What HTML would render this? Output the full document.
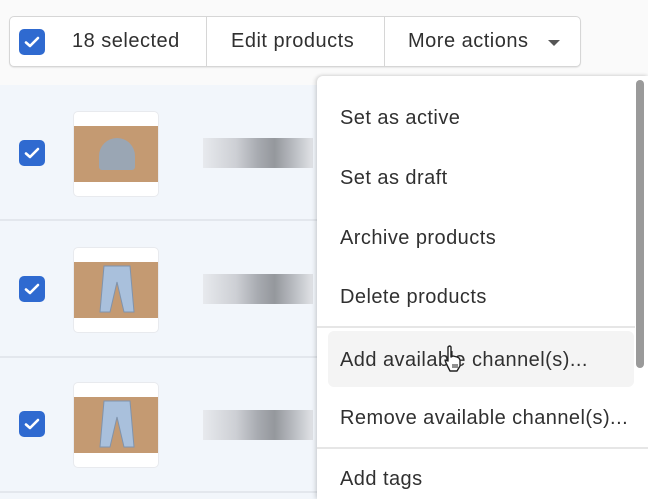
<!DOCTYPE html>
<html><head><style>
*{margin:0;padding:0;box-sizing:border-box}
body{width:648px;height:499px;overflow:hidden;background:#fafafa;font-family:"Liberation Sans",Arial,sans-serif;position:relative;color:#303030}
.abs{position:absolute}
.tb{left:9px;top:16px;width:572px;height:51px;background:#fff;border:1px solid #d6d6d6;border-radius:5px;box-shadow:0 1px 1px rgba(0,0,0,.08)}
.cb{width:26px;height:26px;background:#2f6ad0;border-radius:5px}
.cb svg{position:absolute;left:5px;top:6px}
.t{font-size:20px;letter-spacing:.5px;white-space:nowrap}
.list{left:0;top:85px;width:330px;height:414px;background:#f2f6fb}
.div{height:2px;background:#e3e7ed;left:0;width:330px}
.thumb{left:73px;width:86px;height:86px;background:#fff;border-radius:5px;border:1px solid #e8eaee}
.brown{left:0;width:84px;height:56px;top:14px;background:#c49a72}
.blur{left:203px;width:110px;height:30px;background:linear-gradient(90deg,#e6e8ec 0%,#c9cbd0 30%,#9fa2a8 50%,#8a8d92 65%,#b9bcc1 85%,#dfe1e5 100%);opacity:.9}
.dd{left:317px;top:76px;width:331px;height:423px;background:#fff;box-shadow:-2px 0 4px rgba(0,0,0,.12),0 -1px 3px rgba(0,0,0,.08);border-radius:6px 0 0 0}
.item{left:340px;font-size:20px;letter-spacing:.45px;color:#303030;white-space:nowrap}
</style></head><body>
<div class="abs list"></div>
<div class="abs div" style="top:219px"></div>
<div class="abs div" style="top:356px"></div>
<div class="abs div" style="top:491px"></div>

<div class="abs tb"></div>
<div class="abs" style="left:206px;top:17px;width:1px;height:49px;background:#d6d6d6"></div>
<div class="abs" style="left:384px;top:17px;width:1px;height:49px;background:#d6d6d6"></div>
<div class="abs cb" style="left:19px;top:29px"><svg width="16" height="14" viewBox="0 0 16 14"><path d="M2 7.5 L6 11 L14 3" stroke="#fff" stroke-width="2.6" fill="none" stroke-linecap="round" stroke-linejoin="round"/></svg></div>
<div class="abs t" style="left:72px;top:30px">18 selected</div>
<div class="abs t" style="left:231px;top:30px">Edit products</div>
<div class="abs t" style="left:408px;top:30px">More actions</div>
<div class="abs" style="left:548px;top:40px;width:0;height:0;border-left:6px solid transparent;border-right:6px solid transparent;border-top:6px solid #555"></div>

<div class="abs cb" style="left:19px;top:140px"><svg width="16" height="14" viewBox="0 0 16 14"><path d="M2 7.5 L6 11 L14 3" stroke="#fff" stroke-width="2.6" fill="none" stroke-linecap="round" stroke-linejoin="round"/></svg></div>
<div class="abs thumb" style="top:111px"><div class="abs brown"><div class="abs" style="left:25px;top:12px;width:36px;height:32px;background:#9aa6b4;border-radius:18px 18px 3px 3px"></div></div></div>
<div class="abs blur" style="top:138px"></div>

<div class="abs cb" style="left:19px;top:276px"><svg width="16" height="14" viewBox="0 0 16 14"><path d="M2 7.5 L6 11 L14 3" stroke="#fff" stroke-width="2.6" fill="none" stroke-linecap="round" stroke-linejoin="round"/></svg></div>
<div class="abs thumb" style="top:247px"><div class="abs brown"><svg class="abs" style="left:24px;top:2px" width="38" height="52" viewBox="0 0 38 52"><path d="M6 2 H32 L36 48 H26 L19 18 L12 48 H2 Z" fill="#a9c0dc" stroke="#7f93ad" stroke-width="1"/></svg></div></div>
<div class="abs blur" style="top:274px"></div>

<div class="abs cb" style="left:19px;top:411px"><svg width="16" height="14" viewBox="0 0 16 14"><path d="M2 7.5 L6 11 L14 3" stroke="#fff" stroke-width="2.6" fill="none" stroke-linecap="round" stroke-linejoin="round"/></svg></div>
<div class="abs thumb" style="top:382px"><div class="abs brown"><svg class="abs" style="left:24px;top:2px" width="38" height="52" viewBox="0 0 38 52"><path d="M6 2 H32 L36 48 H26 L19 18 L12 48 H2 Z" fill="#a9c0dc" stroke="#7f93ad" stroke-width="1"/></svg></div></div>
<div class="abs blur" style="top:410px"></div>

<div class="abs dd"></div>
<div class="abs" style="left:636px;top:80px;width:8px;height:288px;background:#9a9a9a;border-radius:4px"></div>
<div class="abs item" style="top:107px">Set as active</div>
<div class="abs item" style="top:167px">Set as draft</div>
<div class="abs item" style="top:227px">Archive products</div>
<div class="abs item" style="top:286px">Delete products</div>
<div class="abs" style="left:317px;top:326px;width:318px;height:2px;background:#e6e6e6"></div>
<div class="abs" style="left:328px;top:331px;width:306px;height:56px;background:#f4f4f4;border-radius:6px"></div>
<div class="abs item" style="top:349px">Add available channel(s)...</div>
<div class="abs item" style="top:407px">Remove available channel(s)...</div>
<div class="abs" style="left:317px;top:447px;width:331px;height:2px;background:#e6e6e6"></div>
<div class="abs item" style="top:468px">Add tags</div>
<svg class="abs" style="left:443px;top:345px" width="22" height="28" viewBox="0 0 22 28"><path d="M5 2 Q7 0 8 2 L8 12 L10 11 L12 11.5 L14 12 L16 13 L17 15 L17 21 L14 26 L7 26 L3 18 L2 15 L5 16 Z" fill="#fff" stroke="#222" stroke-width="1.4" stroke-linejoin="round"/><path d="M10 19v4M12 19v4M14 19v4" stroke="#222" stroke-width="1"/></svg>
</body></html>
